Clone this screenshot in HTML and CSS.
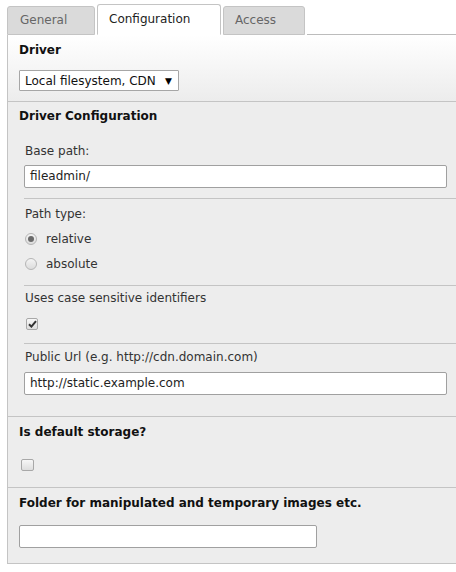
FILE: index.html
```html
<!DOCTYPE html>
<html>
<head>
<meta charset="utf-8">
<link rel="stylesheet" href="styles.css">
</head>
<body>
<div class="page">
  <div class="tabs">
    <div class="tab">General</div>
    <div class="tab active">Configuration</div>
    <div class="tab">Access</div>
    <div class="tab-fill"></div>
  </div>
  <div class="panel">
    <div class="section first">
      <div class="heading">Driver</div>
      <div class="select"><span class="select-text">Local filesystem, CDN</span><span class="select-arrow">▼</span></div>
    </div>
    <div class="section">
      <div class="heading">Driver Configuration</div>
      <div class="row row-first">
        <div class="label">Base path:</div>
        <div class="input wide">fileadmin/</div>
      </div>
      <div class="row row-radio">
        <div class="label">Path type:</div>
        <div class="radios">
          <div class="radio-line"><span class="radio checked"></span><span>relative</span></div>
          <div class="radio-line"><span class="radio"></span><span>absolute</span></div>
        </div>
      </div>
      <div class="row row-check">
        <div class="label">Uses case sensitive identifiers</div>
        <span class="checkbox checked">
          <svg width="9" height="8" viewBox="0 0 9 8"><path d="M1 4.2 L3.4 6.6 L8 1.2" fill="none" stroke="#333" stroke-width="2"/></svg>
        </span>
      </div>
      <div class="row row-last">
        <div class="label">Public Url (e.g. http://cdn.domain.com)</div>
        <div class="input wide">http://static.example.com</div>
      </div>
    </div>
    <div class="section storage">
      <div class="heading">Is default storage?</div>
      <span class="checkbox big"></span>
    </div>
    <div class="section last">
      <div class="heading">Folder for manipulated and temporary images etc.</div>
      <div class="input short"></div>
    </div>
  </div>
</div>
</body>
</html>
```
FILE: styles.css
```css
html, body {
  margin: 0;
  padding: 0;
  background: #fff;
  overflow: hidden;
}
body {
  font-family: "DejaVu Sans", Verdana, sans-serif;
  font-size: 12px;
  color: #333;
}
.page {
  padding-left: 7px;
  width: 460px;
}
.tabs {
  display: flex;
  align-items: flex-end;
  height: 35px;
  gap: 2px;
}
.tab {
  box-sizing: border-box;
  height: 29px;
  line-height: 27px;
  padding: 0 11px;
  border: 1px solid #c4c4c4;
  border-radius: 3px 3px 0 0;
  background: #dadada;
  color: #666;
}
.tab:first-child { width: 88px; padding-left: 12px; }
.tab.active {
  width: 124px;
  height: 31px;
  line-height: 29px;
  background: #fff;
  color: #222;
  border-bottom-color: #fff;
}
.tab:nth-child(3) { width: 82px; }
.tab-fill {
  flex: 1;
  height: 1px;
  background: #bcbcbc;
}
.panel {
  border-left: 1px solid #c4c4c4;
  border-bottom: 1px solid #c4c4c4;
  background: #ededed;
}
.section {
  border-bottom: 1px solid #c4c4c4;
  padding: 5px 0 0 11px;
}
.section.first {
  background: linear-gradient(#ffffff, #ececec);
  padding-top: 6px;
  padding-bottom: 10px;
}
.section.last {
  border-bottom: none;
  padding-top: 6px;
  padding-bottom: 15px;
}
.heading {
  font-weight: bold;
  color: #111;
  line-height: 18px;
}
.select {
  box-sizing: border-box;
  margin-top: 11px;
  width: 160px;
  height: 21px;
  display: flex;
  align-items: center;
  justify-content: space-between;
  padding: 0 6px 0 5px;
  border: 1px solid #a6a6a6;
  border-radius: 1px;
  background: #fff;
  color: #111;
}
.select-arrow {
  font-size: 9px;
  color: #000;
}
.row {
  margin-left: 5px;
  padding: 5px 0 12px 1px;
  border-bottom: 1px solid #c4c4c4;
}
.row-first { margin-top: 9px; padding-top: 8px; padding-bottom: 10px; }
.row-first .input { margin-top: 5px; }
.row-radio { padding-top: 6px; }
.row-check { padding-top: 3px; padding-bottom: 13px; }
.row-last { border-bottom: none; padding-top: 4px; padding-bottom: 21px; }
.label {
  line-height: 18px;
  color: #333;
}
.input {
  box-sizing: border-box;
  height: 23px;
  line-height: 21px;
  margin-top: 6px;
  padding: 0 5px;
  border: 1px solid #a0a0a0;
  border-radius: 2px;
  background: #fff;
  color: #222;
}
.input.wide {
  margin-left: -1px;
  width: 423px;
}
.input.short {
  width: 298px;
  margin-top: 13px;
}
.radios {
  display: flex;
  flex-direction: column;
  gap: 7px;
  margin-top: 7px;
}
.radio-line {
  display: flex;
  align-items: center;
  gap: 9px;
  line-height: 18px;
}
.radio {
  box-sizing: border-box;
  width: 12px;
  height: 12px;
  border-radius: 50%;
  border: 1px solid #b5b5b5;
  background: linear-gradient(#f4f4f4, #dcdcdc);
  display: inline-flex;
  align-items: center;
  justify-content: center;
}
.radio.checked::after {
  content: "";
  width: 6px;
  height: 6px;
  border-radius: 50%;
  background: #6a6a6a;
}
.checkbox {
  box-sizing: border-box;
  display: flex;
  align-items: center;
  justify-content: center;
  width: 12px;
  height: 12px;
  border: 1px solid #a8a8a8;
  border-radius: 2px;
  background: linear-gradient(#f7f7f7, #dedede);
}
.row-check .checkbox {
  margin: 11px 0 0 1px;
}
.storage {
  padding-top: 6px;
  padding-bottom: 16px;
}
.checkbox.big {
  width: 13px;
  height: 12px;
  margin: 18px 0 0 2px;
}
```
